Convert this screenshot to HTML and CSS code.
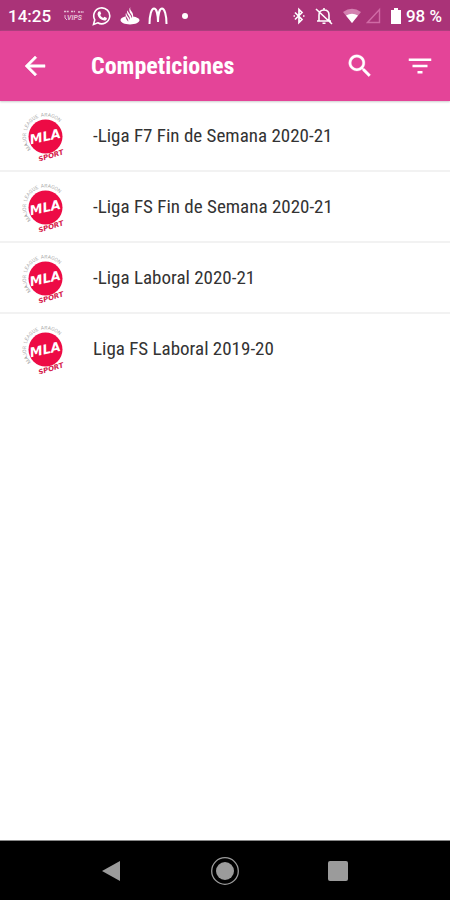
FILE: index.html
```html
<!DOCTYPE html>
<html lang="es">
<head>
<meta charset="utf-8">
<meta name="viewport" content="width=device-width, initial-scale=1">
<title>Competiciones</title>
<link rel="stylesheet" href="styles.css">
</head>
<body>
<svg class="defs" width="0" height="0" aria-hidden="true">
  <defs>
    <path id="ring" d="M11 38A19.500 19.500 0 1 1 44 31"/>
    <symbol id="mla" viewBox="0 0 50 50">
      <circle cx="25.500" cy="25.500" r="17" fill="#ed0b45"/>
      <text class="logo-ring"><textPath href="#ring">MAJOR  LEAGUE  ARAGON</textPath></text>
      <text class="logo-name" x="25" y="30" transform="rotate(-12 25 25)">MLA</text>
      <text class="logo-sport" x="31" y="47" transform="rotate(-17 31 45)">SPORT</text>
    </symbol>
  </defs>
</svg>
<div class="screen">
  <div class="status">
    <div class="status-left">
      <span class="clock">14:25</span>
      <svg width="20" height="20" viewBox="0 0 20 20"><path d="M0 5.500h5M7 5.500h4M14 6h6" stroke="#e6bfd5" stroke-width="1.500" stroke-dasharray="2 .7"/><path d="M1 9v3l2 2" fill="none" stroke="#e6bfd5"/><text class="vips" x="3" y="14">VIPS</text></svg>
      <svg width="20" height="20" viewBox="0 0 20 20"><path d="M1.500 18.500l1.300-4.700a8 8 0 1 1 3 3z" fill="none" stroke="#fff" stroke-width="1.600"/><path d="M6.700 5.500l1.500-.2 1 2.500-1 1.300c.7 1.500 1.500 2.200 3 2.900l1.200-1.300 2.500 1.200c0 2-1.400 2.800-2.600 2.600C8.500 13.900 6.300 11.600 5.600 8.800c-.2-1.400.3-2.600 1.100-3.300z" fill="#fff"/></svg>
      <svg width="20" height="20" viewBox="0 0 20 20"><path d="M10.300 1c-.5 2 .2 3 1.300 4.600 1 1.500 1.800 2.700 1.500 4.800 3.300.7 6.400 1.800 6.400 3.600 0 2.500-4.200 4.400-9.500 4.400S.5 16.500.5 14c0-1.700 2.500-3 5.300-3.700-.2 1.800.5 2.700 1.600 4.200l.8 1.300c.3-1.600-.3-2.700-1.300-4.100C5.800 10.200 5.200 8.700 6 6.700c.5 2 1.400 3 2.400 4.500.6.900 1.200 1.800 1.300 2.800.6-1.800 0-3-1.100-4.600-1.300-1.900-2-3.100-1.300-5.200.6 1.300 1.200 2.100 2 3.200 1.300 1.800 2.300 3.200 2.600 4.800.6-1.500 0-2.700-1-4.200-1.400-2-2.400-4.500-.6-7z" fill="#fff"/></svg>
      <svg width="20" height="20" viewBox="0 0 20 20"><path d="M1.500 18C1.500 9 3.500 2.500 6 2.500S10 9 10 16c0-7 1.500-13.500 4-13.500S18.500 9 18.500 18" fill="none" stroke="#fff" stroke-width="2"/></svg>
      <span class="dot"></span>
    </div>
    <div class="status-right">
      <svg class="bluetooth" width="14" height="20" viewBox="0 0 14 20"><path d="M3 6.500l7 7-3 3v-13l3 3-7 7" fill="none" stroke="#fff" stroke-width="1.700"/><path d="M1.500 10h1.500M11 10h1.500" stroke="#fff" stroke-width="1.700"/></svg>
      <svg width="20" height="20" viewBox="0 0 20 20"><path d="M5 15V9c0-3 1.800-5 5-5s5 2 5 5v6M3 15h14M10 2v2M8.500 17.200h3M2 3l16 15" fill="none" stroke="#fff" stroke-width="1.600"/></svg>
      <svg class="wifi" width="20" height="20" viewBox="0 0 20 20"><path d="M1 6Q10-.5 19 6L10 17z" fill="#d481b1"/><path d="M4 9.500Q10 6 16 9.500L10 17z" fill="#fff"/></svg>
      <svg width="16" height="20" viewBox="0 0 16 20"><path d="M1.500 16.500h12v-13z" fill="none" stroke="#d06aa5" stroke-width="1.400"/></svg>
      <svg class="cell" width="12" height="20" viewBox="0 0 12 20"><path d="M4 2h4v2h3v14H1V4h3z" fill="#fff"/></svg>
      <span class="battery">98 %</span>
    </div>
  </div>
  <header class="bar">
    <button class="icon" aria-label="Atrás"><svg width="30" height="30" viewBox="0 0 24 24"><path d="M20 11H7.800l5.600-5.600L12 4l-8 8 8 8 1.400-1.400L7.800 13H20z" fill="#fff" stroke="#fff" stroke-width=".4"/></svg></button>
    <h1>Competiciones</h1>
    <button class="icon" aria-label="Buscar"><svg width="30" height="30" viewBox="0 0 24 24"><path d="M15.500 14h-.8l-.3-.3a6.500 6.500 0 1 0-.7.700l.3.300v.8l5 5 1.500-1.500zm-6 0a4.500 4.500 0 1 1 0-9 4.500 4.500 0 0 1 0 9z" fill="#fff" stroke="#fff" stroke-width=".2"/></svg></button>
    <button class="icon" aria-label="Filtrar"><svg width="30" height="30" viewBox="0 0 24 24"><path d="M10 18h4v-2h-4zM3 6v2h18V6zm3 7h12v-2H6z" fill="#fff"/></svg></button>
  </header>
  <main>
    <ul class="list">
      <li><a href="#"><svg class="logo" width="50" height="50"><use href="#mla"/></svg><span>-Liga F7 Fin de Semana 2020-21</span></a></li>
      <li><a href="#"><svg class="logo" width="50" height="50"><use href="#mla"/></svg><span>-Liga FS Fin de Semana 2020-21</span></a></li>
      <li><a href="#"><svg class="logo" width="50" height="50"><use href="#mla"/></svg><span>-Liga Laboral 2020-21</span></a></li>
      <li><a href="#"><svg class="logo" width="50" height="50"><use href="#mla"/></svg><span>Liga FS Laboral 2019-20</span></a></li>
    </ul>
  </main>
  <nav class="nav">
    <button aria-label="Volver"><svg width="30" height="30" viewBox="0 0 30 30"><path d="M5 15L23 5v20z" fill="#9b9b9b"/></svg></button>
    <button aria-label="Inicio"><svg width="30" height="30" viewBox="0 0 30 30"><circle cx="15" cy="15" r="13.300" fill="none" stroke="#9b9b9b" stroke-width="1.300"/><circle cx="15" cy="15" r="9" fill="#9b9b9b"/></svg></button>
    <button aria-label="Recientes"><svg width="30" height="30" viewBox="0 0 30 30"><rect x="5" y="5" width="20" height="20" rx="2" fill="#9b9b9b"/></svg></button>
  </nav>
</div>
</body>
</html>
```
FILE: styles.css
```css
* { box-sizing: border-box; }

body {
  margin: 0;
  background: #fff;
  color: #333;
  font-family: "Roboto Condensed", "Liberation Sans Narrow", Roboto, sans-serif;
}

svg { display: block; flex: none; }

button {
  padding: 0;
  border: 0;
  background: none;
}

.defs { position: absolute; }

.screen {
  display: flex;
  flex-direction: column;
  min-height: 100vh;
}

.status {
  display: flex;
  justify-content: space-between;
  align-items: center;
  height: 31px;
  padding: 0 8px;
  background: #aa3378;
  color: #fff;
  font: 500 17px/20px Roboto, sans-serif;
}

.status-left,
.status-right {
  display: flex;
  align-items: center;
}

.status-left { gap: 8px; }
.status-right { gap: 4px; }
.bluetooth { margin-right: 4px; }
.wifi { margin-left: 4px; }
.cell { margin-left: 4px; }
.clock { margin-right: 5px; }
.vips { font: italic 700 7px Roboto, sans-serif; fill: #e6bfd5; }

.dot {
  width: 6px;
  height: 6px;
  margin-left: 6px;
  border-radius: 50%;
  background: #fff;
}

.bar {
  display: flex;
  align-items: center;
  height: 70px;
  padding: 0 15px 0 20px;
  background: #e44498;
  color: #fff;
  box-shadow: 0 1px 2px #ccc;
}

.bar h1 {
  flex: 1;
  margin: 0 0 0 41px;
  font-size: 24px;
  line-height: 30px;
}

.bar .icon + .icon { margin-left: 30px; }

main { flex: 1; }

.list {
  margin: 0;
  padding: 0;
  list-style: none;
}

.list li { border-bottom: 2px solid #f2f2f2; }
.list li:last-child { border-bottom: 0; }

.list a {
  display: flex;
  align-items: center;
  gap: 23px;
  height: 69px;
  padding: 0 20px;
  color: #333;
  font-size: 19px;
  line-height: 24px;
  text-decoration: none;
}

.logo-ring { font: 5px Roboto, sans-serif; fill: #aaa; white-space: pre; }

.logo-name {
  font: italic 700 13px "DejaVu Sans", sans-serif;
  fill: #fff;
  text-anchor: middle;
}

.logo-sport {
  font: italic 700 7px "DejaVu Sans", sans-serif;
  fill: #d51c4c;
  text-anchor: middle;
}

.nav {
  display: flex;
  justify-content: center;
  align-items: center;
  gap: 83px;
  height: 60px;
  border-top: 1px solid #888;
  background: #000;
}
```
